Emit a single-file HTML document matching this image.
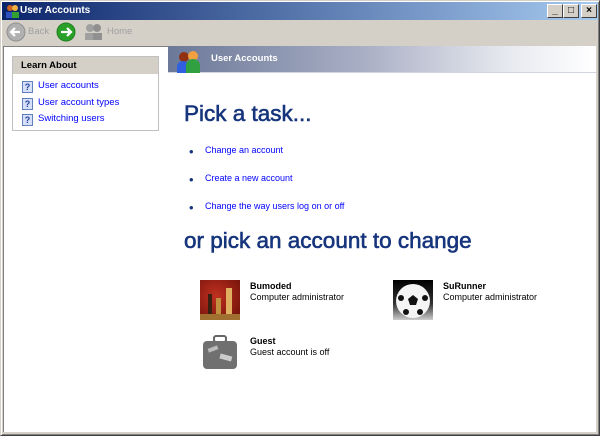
<!DOCTYPE html>
<html><head><style>
*{margin:0;padding:0;box-sizing:border-box}
body{width:600px;height:436px;overflow:hidden;background:#d4d0c8;font-family:Tahoma,"Liberation Sans",sans-serif;position:relative}
.abs{position:absolute}
#win{left:0;top:0;width:600px;height:436px;border:1px solid #d4d0c8;border-right-color:#404040;border-bottom-color:#404040;box-shadow:inset 1px 1px #fff,inset -1px -1px #808080}
#title{left:2px;top:2px;width:596px;height:18px;background:linear-gradient(to right,#0a246a,#a6caf0);color:#fff;font-weight:bold;font-size:10px;line-height:18px;padding-left:18px}
.tb{top:4px;width:16px;height:14px;background:#d4d0c8;border:1px solid;border-color:#fff #404040 #404040 #fff;font-size:10px;line-height:11px;text-align:center;font-weight:bold;color:#000}
#content{left:3px;top:46px;width:593px;height:386px;background:#fff;border-left:1px solid #808080;border-top:1px solid #808080}
.link{color:#0000ff;font-size:9px}
.q{display:inline-block;width:11px;height:12px;background:#d8e0f8;border:1px solid #6080c0;color:#2040a0;font-size:9px;font-weight:bold;text-align:center;line-height:10px;vertical-align:-2px;margin-right:5px}
.acc{font-size:9px;line-height:11px}
.h{font-size:22.5px;color:#17357c;-webkit-text-stroke:0.6px #17357c}
</style></head><body>
<div id="win" class="abs"></div>
<div id="title" class="abs">User Accounts
<svg class="abs" style="left:3px;top:2px" width="15" height="14"><circle cx="5" cy="4" r="3" fill="#d06020"/><circle cx="10" cy="4" r="3" fill="#f0b040"/><rect x="1" y="8" width="7" height="6" fill="#3050c0"/><rect x="7" y="8" width="7" height="6" fill="#30a030"/></svg></div>
<div class="abs tb" style="left:547px">_</div>
<div class="abs tb" style="left:563px">□</div>
<div class="abs tb" style="left:581px">×</div>
<svg class="abs" style="left:6px;top:22px" width="20" height="20"><circle cx="10" cy="10" r="9" fill="#b0b0b0" stroke="#909090"/><path d="M14 10H6M9 6l-4 4 4 4" stroke="#fff" stroke-width="2.2" fill="none"/></svg>
<div class="abs" style="left:28px;top:26px;font-size:9.5px;color:#a0a0a0">Back</div>
<svg class="abs" style="left:56px;top:22px" width="20" height="20"><circle cx="10" cy="10" r="9" fill="#2aa028" stroke="#208020"/><path d="M5 10h8M11 6l4 4-4 4" stroke="#fff" stroke-width="2.2" fill="none"/></svg>
<svg class="abs" style="left:84px;top:23px" width="20" height="18"><circle cx="6" cy="5" r="4" fill="#a0a0a0"/><circle cx="13" cy="5" r="4" fill="#909090"/><rect x="1" y="10" width="9" height="7" fill="#a0a0a0"/><rect x="9" y="10" width="9" height="7" fill="#909090"/></svg>
<div class="abs" style="left:107px;top:26px;font-size:9.5px;color:#a0a0a0">Home</div>
<div id="content" class="abs"></div>
<div class="abs" style="left:12px;top:56px;width:147px;height:75px;border:1px solid #c0c0c0;background:#fff">
<div style="height:17px;background:#d4d0c8;font-weight:bold;font-size:9.5px;line-height:17px;padding-left:8px">Learn About</div>
</div>
<div class="abs" style="left:22px;top:78px;line-height:16.5px">
<div class="link" style="font-size:9.5px"><span class="q">?</span>User accounts</div>
<div class="link" style="font-size:9.5px"><span class="q">?</span>User account types</div>
<div class="link" style="font-size:9.5px"><span class="q">?</span>Switching users</div>
</div>
<div class="abs" style="left:168px;top:46px;width:428px;height:27px;background:linear-gradient(to right,#6b7898,#a8aec4 45%,#e8eaf0 80%,#fff);border-bottom:1px solid #d0d4e0"></div>
<svg class="abs" style="left:176px;top:49px" width="26" height="24"><circle cx="8" cy="8" r="5" fill="#903010"/><circle cx="17" cy="7" r="5" fill="#f0a040"/><path d="M1 24v-6a6 6 0 0 1 12 0v6z" fill="#3060e0"/><path d="M10 24v-7a7 7 0 0 1 14 0v7z" fill="#30a040"/></svg>
<div class="abs" style="left:211px;top:53px;color:#fff;font-weight:bold;font-size:9.5px">User Accounts</div>
<div class="abs h" style="left:184px;top:101px">Pick a task...</div>
<div class="abs" style="left:189px;top:138px;color:#17357c;font-size:13px;line-height:28px">•<br>•<br>•</div>
<div class="abs" style="left:205px;top:136px;line-height:28px">
<div class="link">Change an account</div>
<div class="link">Create a new account</div>
<div class="link">Change the way users log on or off</div>
</div>
<div class="abs h" style="left:184px;top:228px">or pick an account to change</div>
<div class="abs" style="left:200px;top:280px;width:40px;height:40px;background:radial-gradient(circle at 40% 40%,#c03020,#6a1008)"><svg width="40" height="40"><rect x="8" y="14" width="4" height="20" fill="#3a2010"/><rect x="16" y="18" width="5" height="18" fill="#c09040"/><rect x="26" y="8" width="6" height="30" fill="#e0b060"/><rect x="0" y="34" width="40" height="6" fill="#a07030"/></svg></div>
<div class="abs acc" style="left:250px;top:281px"><b>Bumoded</b><br>Computer administrator</div>
<div class="abs" style="left:393px;top:280px;width:40px;height:40px;background:linear-gradient(#000,#333 60%,#ccc)"><svg width="40" height="40"><circle cx="20" cy="21" r="17" fill="#f4f4f4"/><polygon points="20,15 25,19 23,25 17,25 15,19" fill="#111"/><circle cx="8" cy="18" r="3" fill="#111"/><circle cx="32" cy="18" r="3" fill="#111"/><circle cx="13" cy="32" r="3" fill="#111"/><circle cx="27" cy="32" r="3" fill="#111"/></svg></div>
<div class="abs acc" style="left:443px;top:281px"><b>SuRunner</b><br>Computer administrator</div>
<div class="abs" style="left:200px;top:333px;width:40px;height:40px"><svg width="40" height="40"><rect x="14" y="3" width="12" height="6" rx="2" fill="none" stroke="#666" stroke-width="2"/><rect x="3" y="8" width="34" height="28" rx="4" fill="#707070"/><rect x="8" y="14" width="10" height="4" fill="#bbb" transform="rotate(-20 13 16)"/><rect x="20" y="22" width="12" height="5" fill="#ccc" transform="rotate(15 26 24)"/></svg></div>
<div class="abs acc" style="left:250px;top:336px"><b>Guest</b><br>Guest account is off</div>
</body></html>
